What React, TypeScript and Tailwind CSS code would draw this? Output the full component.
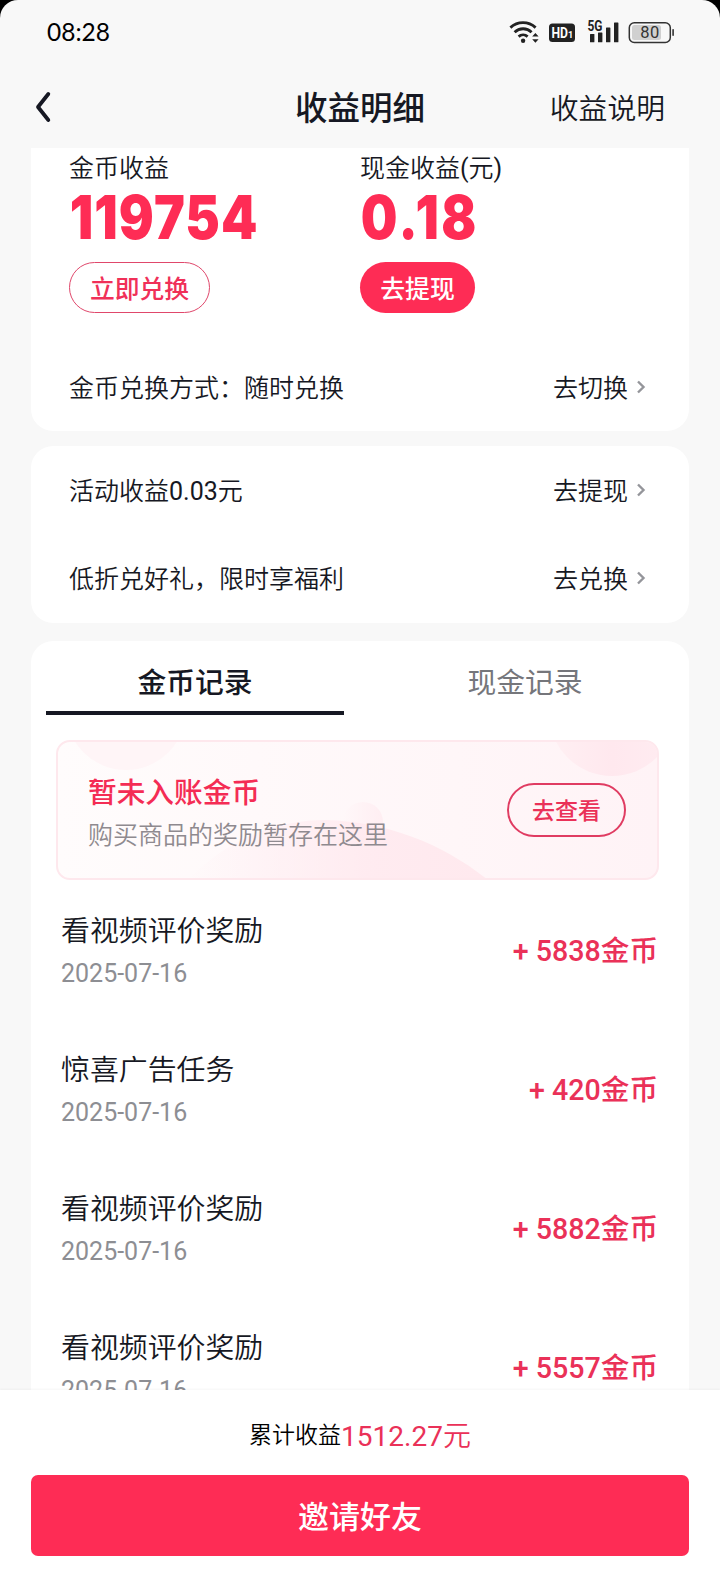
import { useState } from "react";

const records = [
  { id: 1, title: "看视频评价奖励", date: "2025-07-16", amount: 5838 },
  { id: 2, title: "惊喜广告任务", date: "2025-07-16", amount: 420 },
  { id: 3, title: "看视频评价奖励", date: "2025-07-16", amount: 5882 },
  { id: 4, title: "看视频评价奖励", date: "2025-07-16", amount: 5557 },
];

function StatusBar() {
  return (
    <div className="flex h-[64px] shrink-0 items-center justify-between pr-[44px] pl-[47px]">
      <span className="pt-px font-['Lato',sans-serif] text-[24.5px] text-black">
        08:28
      </span>
      <svg width="168" height="28" viewBox="0 0 168 28" fill="#222">
        {/* wifi */}
        <g fill="none" stroke="#222" strokeWidth="2.8">
          <path d="M2.4 9.6a18.5 18.5 0 0 1 25.2 0" />
          <path d="M6.6 14.2a12.2 12.2 0 0 1 17 0" />
          <path d="M10.6 18.6a6.8 6.8 0 0 1 9 0" />
        </g>
        <circle cx="15.1" cy="22.8" r="2.2" />
        <path d="M24.2 18.6l3.2-3.6 3.2 3.6zM24.2 21.2l3.2 3.6 3.2-3.6z" />
        {/* volte */}
        <rect x="41" y="5.5" width="26" height="18.5" rx="3.5" />
        <text
          x="43.5"
          y="19.6"
          fill="#fff"
          fontFamily="Roboto, sans-serif"
          fontWeight="700"
          fontSize="14"
          textLength="16.5"
          lengthAdjust="spacingAndGlyphs"
        >
          HD
        </text>
        <text
          x="60"
          y="19.6"
          fill="#fff"
          fontFamily="Roboto, sans-serif"
          fontWeight="700"
          fontSize="9"
        >
          1
        </text>
        {/* signal */}
        <text
          x="79.5"
          y="13"
          fontFamily="Roboto, sans-serif"
          fontWeight="700"
          fontSize="14"
          textLength="15"
          lengthAdjust="spacingAndGlyphs"
        >
          5G
        </text>
        <rect x="82" y="16" width="4.4" height="8.3" rx="0.6" />
        <rect x="90" y="14.5" width="4.4" height="9.8" rx="0.6" />
        <rect x="98" y="9.5" width="4.4" height="14.8" rx="0.6" />
        <rect x="106" y="4.5" width="4.4" height="19.8" rx="0.6" />
        {/* battery */}
        <rect
          x="121.3"
          y="4.8"
          width="41"
          height="19.6"
          rx="5"
          fill="none"
          stroke="#333"
          strokeWidth="1.5"
        />
        <rect x="124" y="7" width="29" height="15" rx="2.5" fill="#d0d0d0" />
        <rect x="164.3" y="11" width="1.6" height="7" rx="0.8" fill="#333" />
        <text
          x="141.8"
          y="20.4"
          fill="#333"
          fontFamily="Roboto, sans-serif"
          fontSize="16.5"
          textLength="19"
          textAnchor="middle"
        >
          80
        </text>
      </svg>
    </div>
  );
}

function Header() {
  return (
    <header className="grid h-[84px] shrink-0 grid-cols-[1fr_auto_1fr] items-center px-[35px]">
      <svg
        width="17"
        height="34"
        viewBox="0 0 17 34"
        fill="none"
        stroke="#161823"
        strokeWidth="3.8"
        strokeLinecap="round"
        strokeLinejoin="round"
      >
        <path d="M13.3 5L3 18 13.3 31" />
      </svg>
      <h1 className="pt-[6px] text-[32.5px] font-medium">收益明细</h1>
      <span className="mr-[20px] justify-self-end pt-[7px] font-[Roboto,'Noto_Sans_CJK_SC_DemiLight','Noto_Sans_CJK_SC',sans-serif] text-[28.8px]">
        收益说明
      </span>
    </header>
  );
}

function LinkRow({ label, action }: { label: string; action: string }) {
  return (
    <div className="flex h-[88px] items-center justify-between pt-[4px] pr-[4px] font-[Roboto,'Noto_Sans_CJK_SC_DemiLight','Noto_Sans_CJK_SC',sans-serif] text-[25px]">
      <span>{label}</span>
      <span className="flex items-center gap-[9px]">
        {action}
        <svg
          className="-mt-[4px]"
          width="10"
          height="14"
          viewBox="0 0 10 14"
          fill="none"
          stroke="#94959a"
          strokeWidth="2.4"
        >
          <path d="M1 1.5L6.5 7 1 12.5" />
        </svg>
      </span>
    </div>
  );
}

function PendingBanner() {
  return (
    <div className="relative mr-[30px] ml-[25px] mt-[25px] flex h-[140px] items-center justify-between overflow-hidden rounded-[14px] border-2 border-[#fee8ed] bg-linear-to-r from-[#fffcfc] to-[#fff3f6] pr-[31px] pl-[30px]">
      <svg
        className="absolute inset-0"
        width="600"
        height="136"
        viewBox="0 0 600 136"
      >
        <defs>
          <linearGradient id="hill" x1="0" y1="0" x2="1" y2="0">
            <stop offset="0" stopColor="#ffe8ee" stopOpacity="0" />
            <stop offset="0.6" stopColor="#ffe8ee" stopOpacity="0.8" />
            <stop offset="1" stopColor="#ffe9ee" />
          </linearGradient>
          <linearGradient id="drop" x1="0" y1="0" x2="1" y2="0">
            <stop offset="0" stopColor="#ffeaef" stopOpacity="0" />
            <stop offset="1" stopColor="#ffeaef" stopOpacity="0.7" />
          </linearGradient>
          <linearGradient id="corner" x1="0" y1="0" x2="1" y2="0">
            <stop offset="0" stopColor="#fff0f3" />
            <stop offset="0.5" stopColor="#ffe8ee" />
            <stop offset="1" stopColor="#ffecf1" />
          </linearGradient>
        </defs>
        <circle cx="68" cy="-32" r="60" fill="#fff5f7" />
        <circle cx="554" cy="-29" r="63" fill="url(#corner)" />
        <circle cx="305" cy="80" r="20" fill="url(#drop)" />
        <path
          d="M130 138C170 96 220 78 268 78C330 80 385 102 430 138Z"
          fill="url(#hill)"
        />
      </svg>
      <div className="relative flex flex-col pt-[9px]">
        <span className="text-[28.7px] leading-[43px] font-medium text-[#f42c54]">
          暂未入账金币
        </span>
        <span className="font-[Roboto,'Noto_Sans_CJK_SC_DemiLight','Noto_Sans_CJK_SC',sans-serif] text-[25px] leading-[42px] text-[#8f8a8f]">
          购买商品的奖励暂存在这里
        </span>
      </div>
      <button className="relative h-[54px] w-[119px] rounded-full border-2 border-[#e03c62] pt-[4px] text-[23px] font-medium text-[#ea3158]">
        去查看
      </button>
    </div>
  );
}

export default function App() {
  const [tab, setTab] = useState("coin");

  return (
    <div className="h-[1580px] w-[720px] bg-black">
      <div className="flex h-full flex-col overflow-hidden rounded-t-[18px] bg-[#f8f8f8] font-[Roboto,'Noto_Sans_CJK_SC',sans-serif] text-[#161823]">
        <StatusBar />
        <Header />

        <main className="h-[1242px] shrink-0 overflow-hidden px-[31px]">
          <section className="h-[283px] rounded-b-[22px] bg-white px-[38px]">
            <div className="grid h-[195px] grid-cols-2">
              <div className="flex flex-col items-start">
                <span className="font-[Roboto,'Noto_Sans_CJK_SC_DemiLight','Noto_Sans_CJK_SC',sans-serif] text-[25px] leading-[42px]">
                  金币收益
                </span>
                <span className="-mt-[2px] h-[74px] origin-left scale-x-[0.865] pl-px font-['Inter',sans-serif] text-[60px] leading-[59px] font-black tracking-[1.2px] text-[#fe2c55]">
                  119754
                </span>
                <button className="h-[51px] w-[141px] rounded-full border border-[#e0476b] pt-[5px] text-[24.8px] font-medium text-[#f03058]">
                  立即兑换
                </button>
              </div>
              <div className="flex flex-col items-start">
                <span className="font-[Roboto,'Noto_Sans_CJK_SC_DemiLight','Noto_Sans_CJK_SC',sans-serif] text-[25px] leading-[42px]">
                  现金收益(元)
                </span>
                <span className="-mt-[2px] h-[74px] origin-left scale-x-[0.86] pl-px font-['Inter',sans-serif] text-[60px] leading-[59px] font-black tracking-[3px] text-[#fe2c55]">
                  0.18
                </span>
                <button className="h-[51px] w-[115px] rounded-full bg-[#fe2c55] pt-[5px] text-[24.8px] font-medium text-white">
                  去提现
                </button>
              </div>
            </div>
            <LinkRow label="金币兑换方式：随时兑换" action="去切换" />
          </section>

          <section className="mt-[15px] h-[177px] rounded-[22px] bg-white px-[38px]">
            <LinkRow label="活动收益0.03元" action="去提现" />
            <LinkRow label="低折兑好礼，限时享福利" action="去兑换" />
          </section>

          <section className="mt-[18px] rounded-t-[22px] bg-white">
            <div className="grid grid-cols-2 gap-[32px] px-[15px]">
              <button
                onClick={() => setTab("coin")}
                className={`h-[74px] border-b-4 pt-[16px] text-[28.8px] ${tab === "coin" ? "border-[#161823] font-medium" : "border-transparent text-[#75767b]"}`}
              >
                金币记录
              </button>
              <button
                onClick={() => setTab("cash")}
                className={`h-[74px] border-b-4 pt-[16px] text-[28.8px] ${tab === "cash" ? "border-[#161823] font-medium" : "border-transparent text-[#75767b]"}`}
              >
                现金记录
              </button>
            </div>

            <PendingBanner />

            <ul className="px-[30px] pt-[2px]">
              {records.map((record) => (
                <li
                  key={record.id}
                  className="flex h-[139px] items-center justify-between"
                >
                  <div className="flex flex-col pt-[2px]">
                    <span className="font-[Roboto,'Noto_Sans_CJK_SC_DemiLight','Noto_Sans_CJK_SC',sans-serif] text-[28.9px] leading-[43px]">
                      {record.title}
                    </span>
                    <span className="text-[25px] leading-[42px] text-[#8d8e93]">
                      {record.date}
                    </span>
                  </div>
                  <span className="pr-px text-[28.6px] font-medium text-[#ea3158]">
                    + {record.amount}金币
                  </span>
                </li>
              ))}
            </ul>
          </section>
        </main>

        <footer className="flex flex-1 flex-col items-center bg-white px-[31px] shadow-[0_-1px_2px_rgba(0,0,0,0.04)]">
          <p className="flex h-[85px] shrink-0 items-center pt-[8px] font-[Roboto,'Noto_Sans_CJK_SC_DemiLight','Noto_Sans_CJK_SC',sans-serif] text-[23px] text-black">
            累计收益
            <span className="text-[28px] text-[#ea3158]">1512.27元</span>
          </p>
          <button className="h-[81px] w-full rounded-[7px] bg-[#fe2c55] pt-[5px] text-[31px] font-medium text-white">
            邀请好友
          </button>
        </footer>
      </div>
    </div>
  );
}
